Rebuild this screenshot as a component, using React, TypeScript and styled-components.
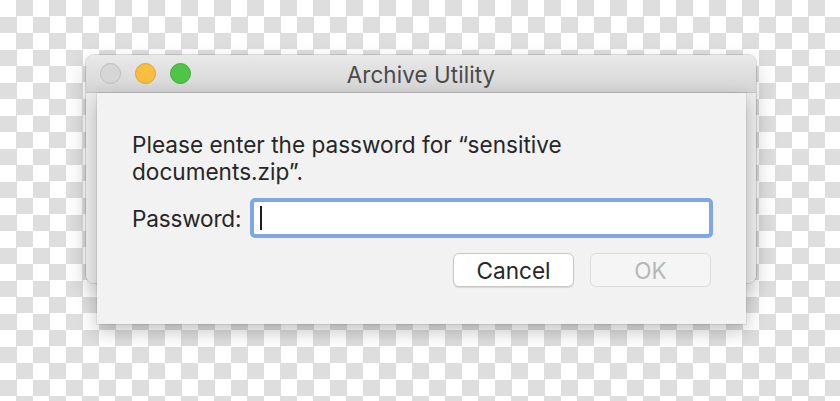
import React from "react";
import styled, { createGlobalStyle } from "styled-components";

const Global = createGlobalStyle`
  html, body {
    margin: 0;
    padding: 0;
    width: 840px;
    height: 401px;
    overflow: hidden;
  }
  body {
    background-color: #ffffff;
    background-image: conic-gradient(#dedede 25%, #ffffff 0 50%, #dedede 0 75%, #ffffff 0);
    background-size: 33px 33px;
    font-family: Inter, "Liberation Sans", sans-serif;
  }
`;

const Stage = styled.div`
  width: 840px;
  height: 401px;
  box-sizing: border-box;
  padding: 55px 0 0 86px;
`;

const Window = styled.div`
  position: relative;
  width: 670px;
  height: 228px;
  border-radius: 8px;
  background: #e9e9e9;
  box-shadow: 0 0 0 1px rgba(0, 0, 0, 0.12), 0 8px 22px rgba(0, 0, 0, 0.18);
  display: flex;
  flex-direction: column;
`;

const TitleBar = styled.div`
  height: 38px;
  flex: none;
  box-sizing: border-box;
  border-radius: 8px 8px 0 0;
  background: linear-gradient(#e9e9e9, #d5d5d5);
  border-bottom: 1px solid #c3c3c3;
  display: grid;
  grid-template-columns: 1fr auto 1fr;
  align-items: center;
  padding: 0 14px;
`;

const Lights = styled.div`
  display: flex;
  gap: 14px;
  align-items: center;
`;

const Light = styled.span<{ $fill: string; $ring: string }>`
  width: 21px;
  height: 21px;
  border-radius: 50%;
  box-sizing: border-box;
  background: ${(p) => p.$fill};
  border: 1px solid ${(p) => p.$ring};
`;

const Title = styled.div`
  font-size: 22.4px;
  color: #4a4a4a;
  letter-spacing: 0.1px;
  padding-top: 1px;
`;

const Body = styled.div`
  flex: 1;
  border-radius: 0 0 8px 8px;
  background: #ececec;
`;

const Sheet = styled.div`
  position: absolute;
  top: 38px;
  left: 11px;
  width: 649px;
  height: 231px;
  box-sizing: border-box;
  background: #f2f2f2;
  box-shadow: 0 0 0 1px rgba(0, 0, 0, 0.06), 0 7px 18px rgba(0, 0, 0, 0.24);
  padding: 38px 33px 0 35px;
  display: flex;
  flex-direction: column;
`;

const Message = styled.p`
  margin: 0;
  font-size: 22.6px;
  line-height: 27px;
  color: #262626;
  width: 480px;
`;

const FieldRow = styled.div`
  display: flex;
  align-items: center;
  gap: 9px;
  margin-top: 13px;
`;

const Label = styled.label`
  font-size: 22.6px;
  color: #262626;
  letter-spacing: -0.2px;
`;

const Input = styled.div`
  flex: 1;
  height: 40px;
  box-sizing: border-box;
  border: 4px solid #7fa7e8;
  border-radius: 5px;
  background: #ffffff;
  display: flex;
  align-items: center;
  padding-left: 6px;
`;

const Caret = styled.span`
  width: 2px;
  height: 24px;
  background: #1c1c1c;
`;

const Actions = styled.div`
  display: flex;
  justify-content: flex-end;
  gap: 16px;
  margin-top: 15px;
  padding-right: 2px;
`;

const Button = styled.button<{ $disabled?: boolean }>`
  width: 121px;
  height: 34px;
  border-radius: 6px;
  font-family: inherit;
  font-size: 22.6px;
  padding: 0;
  background: ${(p) => (p.$disabled ? "#f5f5f5" : "#ffffff")};
  color: ${(p) => (p.$disabled ? "#b8b8b8" : "#262626")};
  border: 1px solid ${(p) => (p.$disabled ? "#dcdcdc" : "#c8c8c8")};
  box-shadow: ${(p) => (p.$disabled ? "none" : "0 1px 1px rgba(0,0,0,0.12)")};
`;

export default function App() {
  return (
    <>
      <Global />
      <Stage>
        <Window>
          <TitleBar>
            <Lights>
              <Light $fill="#d6d6d6" $ring="#bdbdbd" />
              <Light $fill="#f9bd3f" $ring="#dfa233" />
              <Light $fill="#4fc548" $ring="#3dac36" />
            </Lights>
            <Title>Archive Utility</Title>
            <span />
          </TitleBar>
          <Body />
          <Sheet>
            <Message>
              Please enter the password for “sensitive documents.zip”.
            </Message>
            <FieldRow>
              <Label>Password:</Label>
              <Input>
                <Caret />
              </Input>
            </FieldRow>
            <Actions>
              <Button>Cancel</Button>
              <Button $disabled disabled>
                OK
              </Button>
            </Actions>
          </Sheet>
        </Window>
      </Stage>
    </>
  );
}
